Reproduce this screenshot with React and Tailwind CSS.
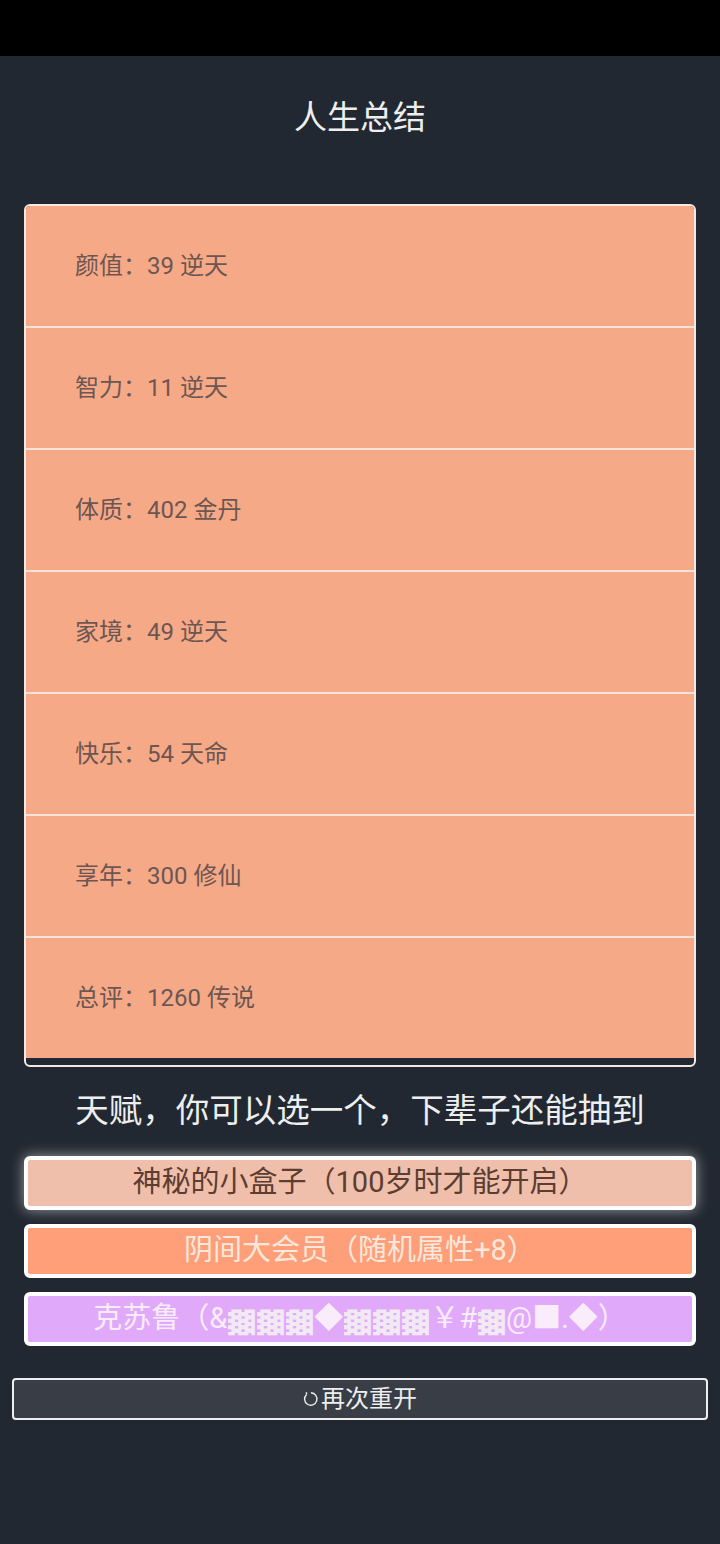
import React from 'react';

const FONT = { fontFamily: 'Roboto, "Noto Sans CJK SC", "Noto Sans", sans-serif' };

const ROWS = [
  ['颜值', '39 逆天'],
  ['智力', '11 逆天'],
  ['体质', '402 金丹'],
  ['家境', '49 逆天'],
  ['快乐', '54 天命'],
  ['享年', '300 修仙'],
  ['总评', '1260 传说'],
];

// shade blocks: dotted like DejaVu, but as wide as a full-width glyph
const Shade = ({ n }) => (
  <>
    {Array.from({ length: n }).map((_, i) => (
      <span key={i} className="inline-block w-[29px] text-center align-middle leading-none">
        <span
          className="inline-block scale-x-[2.05] text-[22px] text-[#f1eaf4]"
          style={{ fontFamily: '"DejaVu Sans Mono", monospace' }}
        >
          ▓
        </span>
      </span>
    ))}
  </>
);

const TALENTS = [
  { key: 'box', text: '神秘的小盒子（100岁时才能开启）', cls: 'bg-[#efbfab] text-[#5c3d30] shadow-[0_0_14px_rgba(255,255,255,0.55)]' },
  { key: 'vip', text: '阴间大会员（随机属性+8）', cls: 'bg-[#fe9f7a] text-[#fbe8dc]' },
  {
    key: 'ctl',
    text: (
      <>
        克苏鲁（&amp;<Shade n={3} />◆<Shade n={3} />￥#<Shade n={1} />@■.◆）
      </>
    ),
    cls: 'bg-[#e1a9f9] text-[#f9ecfb]',
  },
];

const RefreshIcon = () => (
  <svg width="16" height="16" viewBox="0 0 16 16" fill="none" stroke="currentColor" strokeWidth="1.4" className="mr-[2px]">
    <path d="M3.6 3.4A6.2 6.2 0 1 0 8 1.8" />
    <path d="M3.6 3.4 L3.4 1.2" />
  </svg>
);

export default function App() {
  return (
    <div className="min-h-[1544px] w-[720px] bg-[#222831]" style={FONT}>
      <div className="h-14 bg-black" />
      <div className="h-[123px] flex items-center justify-center text-[33px] text-[#eeeeee]">人生总结</div>

      <div className="mx-6 mt-[25px] border-2 border-[#f2e9e5] rounded-md overflow-hidden pb-[7px]">
        {ROWS.map(([k, v], i) => (
          <div
            key={k}
            className={`h-[120px] flex items-center pl-[49px] bg-[#f6a987] text-[24px] text-[#6d5652] ${i < ROWS.length - 1 ? 'border-b-2 border-[#f6e4dc] box-content' : ''}`}
          >
            {k}：{v}
          </div>
        ))}
      </div>

      <div className="h-[89px] flex items-center justify-center text-[33.5px] text-[#eeeeee]">
        天赋，你可以选一个，下辈子还能抽到
      </div>

      <div className="mx-6 flex flex-col gap-[14px]">
        {TALENTS.map((t) => (
          <div
            key={t.key}
            className={`h-[54px] flex items-center justify-center border-4 border-white rounded-md text-[29px] whitespace-nowrap ${t.cls}`}
          >
            <span>{t.text}</span>
          </div>
        ))}
      </div>

      <div className="mx-3 mt-8 h-[42px] flex items-center justify-center bg-[#393e46] border-2 border-[#eeeeee] rounded text-[24px] text-[#eeeeee]">
        <RefreshIcon />
        <span>再次重开</span>
      </div>
    </div>
  );
}
